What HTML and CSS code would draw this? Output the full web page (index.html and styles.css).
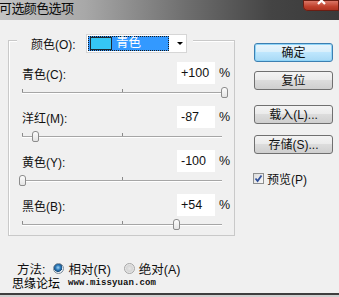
FILE: index.html
```html
<!DOCTYPE html>
<html lang="zh">
<head>
<meta charset="utf-8">
<title>可选颜色选项</title>
<link rel="stylesheet" href="styles.css">
</head>
<body>
<div class="titlebar">
  <span class="title">可选颜色选项</span>
  <span class="close"><svg width="36" height="11" viewBox="0 0 36 11"><path d="M15 -3 L22 4 M22 -3 L15 4" stroke="#fff" stroke-width="2.2" fill="none"/></svg></span>
</div>
<div class="main">
  <div class="left">
    <div class="group">
      <div class="group-head">
        <span class="head-label">颜色(O):</span>
        <div class="select">
          <span class="sel-item"><span class="swatch"></span><span class="sel-text">青色</span></span>
          <span class="arrow"></span>
        </div>
      </div>
      <div class="rows">
        <div class="row">
          <div class="row-top"><span class="label">青色(C):</span><span class="input">+100</span><span class="pct">%</span></div>
          <div class="slider"><span class="tick tick-left"></span><span class="tick tick-mid"></span><span class="thumb" style="left:199px"></span></div>
        </div>
        <div class="row">
          <div class="row-top"><span class="label">洋红(M):</span><span class="input">-87</span><span class="pct">%</span></div>
          <div class="slider"><span class="tick tick-left"></span><span class="tick tick-mid"></span><span class="thumb" style="left:10px"></span></div>
        </div>
        <div class="row">
          <div class="row-top"><span class="label">黄色(Y):</span><span class="input">-100</span><span class="pct">%</span></div>
          <div class="slider"><span class="tick tick-left"></span><span class="tick tick-mid"></span><span class="thumb" style="left:-3px"></span></div>
        </div>
        <div class="row">
          <div class="row-top"><span class="label">黑色(B):</span><span class="input">+54</span><span class="pct">%</span></div>
          <div class="slider"><span class="tick tick-left"></span><span class="tick tick-mid"></span><span class="thumb" style="left:151px"></span></div>
        </div>
      </div>
    </div>
    <div class="method">
      <span class="method-label">方法:</span>
      <span class="radio radio-on"></span><span class="radio-text">相对(R)</span>
      <span class="radio radio-off"></span><span class="radio-text">绝对(A)</span>
    </div>
    <div class="watermark">
      <span class="wm-cn">思缘论坛</span>
      <span class="wm-url">www.missyuan.com</span>
    </div>
  </div>
  <div class="buttons">
    <button class="btn btn-default">确定</button>
    <button class="btn btn-reset">复位</button>
    <button class="btn btn-load">载入(L)...</button>
    <button class="btn btn-save">存储(S)...</button>
    <label class="preview"><span class="checkbox"><svg width="9" height="9" viewBox="0 0 9 9"><path d="M1.5 4.5 L3.6 7 L7.5 1.5" stroke="#2f4f9a" stroke-width="1.8" fill="none"/></svg></span><span class="preview-text">预览(P)</span></label>
  </div>
</div>
<div class="bottom-edge"></div>
</body>
</html>
```

FILE: styles.css
```css
html, body {
  margin: 0;
  padding: 0;
}
body {
  width: 339px;
  height: 297px;
  overflow: hidden;
  background: #f0f0f0;
  font-family: "Liberation Sans", "Noto Sans CJK SC", sans-serif;
  font-size: 12px;
  color: #111;
  display: flex;
  flex-direction: column;
}
.titlebar {
  height: 20px;
  flex: none;
  display: flex;
  align-items: flex-start;
  background: linear-gradient(to right, #c4c4c4 0%, #a8a8a8 25%, #6e6e6e 55%, #444 80%, #3a3a3a 100%);
  overflow: hidden;
}
.title {
  margin-left: -1px;
  margin-top: 1px;
  font-size: 13px;
  line-height: 16px;
  color: #0a0a0a;
  letter-spacing: -0.6px;
}
.close {
  margin-left: auto;
  width: 36px;
  height: 11px;
  border-radius: 0 0 0 5px;
  background: linear-gradient(#e08070, #c0402c 60%, #a8301e);
  box-shadow: inset 0 0 0 1px #6a1d12;
  display: block;
}
.close svg { display: block; }
.main {
  display: flex;
  align-items: flex-start;
}
.left {
  margin-left: 8px;
  width: 227px;
  display: flex;
  flex-direction: column;
}
.group {
  margin-top: 20px;
  height: 196px;
  box-sizing: border-box;
  border: 1px solid #c9c9c9;
  box-shadow: inset 1px 1px 0 #fff;
}
.group-head {
  margin-top: -7px;
  margin-left: 8px;
  width: 176px;
  padding-left: 14px;
  box-sizing: border-box;
  display: flex;
  align-items: center;
  height: 18px;
  background: #f0f0f0;
}
.head-label {
  width: 55px;
  flex: none;
}
.select {
  width: 101px;
  height: 19px;
  box-sizing: border-box;
  background: #fff;
  border: 1px solid #d6d6d6;
  display: flex;
  align-items: center;
  padding-left: 1px;
}
.sel-item {
  width: 81px;
  height: 15px;
  box-sizing: border-box;
  background: #3399ff;
  border: 1px dotted #1a1a1a;
  display: flex;
  align-items: center;
  padding-left: 1px;
}
.swatch {
  width: 22px;
  height: 13px;
  box-sizing: border-box;
  background: #35c6f4;
  border: 1px solid #1c2a33;
  flex: none;
}
.sel-text {
  color: #fff;
  margin-left: 4px;
  line-height: 13px;
  font-size: 12.5px;
}
.arrow {
  margin-left: 8px;
  width: 0;
  height: 0;
  border-left: 3px solid transparent;
  border-right: 3px solid transparent;
  border-top: 3px solid #000;
}
.rows {
  margin-top: 10px;
  padding-left: 13px;
  display: flex;
  flex-direction: column;
  gap: 4px;
}
.row {
  display: flex;
  flex-direction: column;
}
.row-top {
  height: 22px;
  display: flex;
  align-items: center;
}
.label {
  flex: 1;
}
.input {
  width: 38px;
  height: 22px;
  box-sizing: border-box;
  background: #fff;
  padding-left: 4px;
  line-height: 22px;
  font-size: 12.5px;
}
.pct {
  margin-left: 4px;
  width: 15px;
  font-size: 12.5px;
}
.slider {
  position: relative;
  width: 200px;
  height: 18px;
}
.slider::before {
  content: "";
  position: absolute;
  left: 0;
  right: 0;
  top: 8px;
  height: 1px;
  background: #a6a6a6;
  box-shadow: 0 1px 0 #fff;
}
.tick {
  position: absolute;
  top: 5px;
  width: 1px;
  height: 3px;
  background: #8a8a8a;
}
.tick-left { left: 0; }
.tick-mid { left: 100px; }
.thumb {
  position: absolute;
  top: 3px;
  width: 7px;
  height: 11px;
  box-sizing: border-box;
  border: 1px solid #8c8c8c;
  border-radius: 3px 3px 2px 2px;
  background: linear-gradient(#fdfdfd, #e4e4e4);
}
.method {
  margin-top: 25px;
  margin-left: 9px;
  height: 14px;
  display: flex;
  align-items: center;
  font-size: 12.5px;
}
.method-label {
  margin-right: 8px;
}
.radio {
  width: 11px;
  height: 11px;
  box-sizing: border-box;
  border-radius: 50%;
  flex: none;
  margin-right: 4px;
}
.radio-on {
  border: 1px solid #7a8a99;
  background: radial-gradient(circle at 45% 40%, #9fd3f5 0, #2a78b8 2.5px, #1c4f80 4px, #e8eef3 4.5px);
}
.radio-off {
  margin-left: 13px;
  border: 1px solid #a5a5a5;
  background: radial-gradient(circle at 50% 50%, #e6e6e6 0, #d5d5d5 3px, #f4f4f4 5px);
}
.watermark {
  margin-top: 0;
  margin-left: 4px;
  height: 15px;
  display: flex;
  align-items: center;
}
.wm-cn {
  font-size: 12px;
  color: #000;
  width: 56px;
}
.wm-url {
  font-family: "Liberation Mono", "DejaVu Sans Mono", monospace;
  font-weight: bold;
  font-size: 9px;
  color: #111;
  letter-spacing: 0.1px;
}
.buttons {
  margin-left: 19px;
  margin-top: 23px;
  width: 79px;
  display: flex;
  flex-direction: column;
  align-items: stretch;
}
.btn {
  height: 19px;
  padding: 0;
  box-sizing: border-box;
  border: 1px solid #707070;
  border-radius: 3px;
  background: linear-gradient(#f4f4f4 0%, #ebebeb 45%, #dcdcdc 50%, #cfcfcf 100%);
  font-family: "Liberation Sans", "Noto Sans CJK SC", sans-serif;
  font-size: 12px;
  color: #111;
  line-height: 16px;
}
.btn-default {
  border-color: #3c7fb1;
  background: linear-gradient(#e9f5fc 0%, #d9effb 45%, #bee6fd 50%, #a7d9f5 100%);
  box-shadow: inset 0 0 0 1px #8fd4f7;
}
.btn-reset { margin-top: 9px; }
.btn-load { margin-top: 15px; }
.btn-save { margin-top: 11px; }
.preview {
  margin-top: 16px;
  margin-left: -1px;
  display: flex;
  align-items: center;
}
.checkbox {
  width: 11px;
  height: 11px;
  box-sizing: border-box;
  border: 1px solid #8e8f8f;
  background: linear-gradient(135deg, #dcdcdc, #f8f8f8);
  display: flex;
  align-items: center;
  justify-content: center;
}
.checkbox svg { display: block; }
.preview-text {
  margin-left: 3px;
}
.bottom-edge {
  margin-top: auto;
  height: 4px;
  flex: none;
  box-sizing: border-box;
  border-top: 2px solid #3e3e3e;
  background: #cfcfcf;
}
```
